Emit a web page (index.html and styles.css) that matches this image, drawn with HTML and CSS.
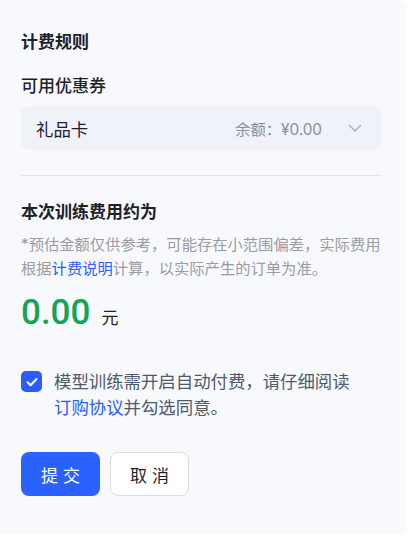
FILE: index.html
```html
<!DOCTYPE html>
<html lang="zh-CN">

<head>
    <meta charset="UTF-8">
    <meta name="viewport" content="width=device-width, initial-scale=1.0">
    <title>计费规则</title>
    <link rel="stylesheet" href="styles.css">
</head>

<body>
    <section class="billing-card">
        <h2 class="title">计费规则</h2>

        <div class="field">
            <label class="field-label">可用优惠券</label>
            <div class="select">
                <span class="select-value">礼品卡</span>
                <span class="select-extra">余额：¥0.00</span>
                <svg class="select-arrow" width="14" height="14" viewBox="0 0 14 14">
                    <path d="M1.5 4.5 L7 10 L12.5 4.5" fill="none" stroke="#a4a9b3" stroke-width="1.3" stroke-linecap="round" stroke-linejoin="round" />
                </svg>
            </div>
        </div>

        <hr class="divider">

        <div class="cost">
            <h3 class="cost-title">本次训练费用约为</h3>
            <p class="cost-note">*预估金额仅供参考，可能存在小范围偏差，实际费用根据<a href="#">计费说明</a>计算，以实际产生的订单为准。</p>
            <div class="cost-amount">
                <span class="amount">0.00</span>
                <span class="unit">元</span>
            </div>
        </div>

        <label class="agree">
            <span class="checkbox">
                <svg width="14" height="14" viewBox="0 0 14 14">
                    <path d="M2.5 7.2 L5.6 10.2 L11.5 4" fill="none" stroke="#fff" stroke-width="2" stroke-linecap="round" stroke-linejoin="round" />
                </svg>
            </span>
            <span class="agree-text">模型训练需开启自动付费，请仔细阅读<a href="#">订购协议</a>并勾选同意。</span>
        </label>

        <div class="actions">
            <button class="btn btn-primary">提 交</button>
            <button class="btn btn-default">取 消</button>
        </div>
    </section>
</body>

</html>
```

FILE: styles.css
```css
body {
    margin: 0;
    padding: 0;
    background-color: #fff;
    font-family: Inter, "Noto Sans CJK SC", sans-serif;
    color: #1d2129;
}

.billing-card {
    width: 406px;
    box-sizing: border-box;
    padding: 30px 24px 38px 21px;
    background-color: #f8f9fc;
    border-radius: 0 8px 8px 0;
    box-shadow: 0 1px 3px rgba(0, 0, 0, 0.04);
}

.title {
    margin: 0;
    font-size: 17px;
    font-weight: 700;
    line-height: 24px;
}

.field {
    margin-top: 20px;
}

.field-label {
    display: block;
    font-size: 17px;
    font-weight: 500;
    line-height: 24px;
}

.select {
    display: flex;
    align-items: center;
    height: 44px;
    margin-top: 8px;
    padding: 0 20px 0 15px;
    background-color: #eff2f9;
    border-radius: 8px;
}

.select-value {
    flex: 1;
    font-size: 17.4px;
    color: #1d2129;
}

.select-extra {
    font-size: 15.3px;
    color: #86909c;
    margin-right: 26px;
}

.divider {
    margin: 25px 0 0;
    border: none;
    border-top: 1px solid #e5e6eb;
}

.cost {
    margin-top: 24px;
}

.cost-title {
    margin: 0;
    font-size: 17px;
    font-weight: 600;
    line-height: 24px;
}

.cost-note {
    margin: 9px 0 0;
    font-size: 15.3px;
    line-height: 24px;
    color: #999ca3;
}

.cost-note a,
.agree-text a {
    color: #2b5cff;
    text-decoration: none;
}

.cost-amount {
    display: flex;
    align-items: baseline;
    margin-top: 10px;
}

.amount {
    font-family: Roboto, sans-serif;
    font-size: 35px;
    font-weight: 500;
    color: #15a35a;
    line-height: 44px;
}

.unit {
    margin-left: 11px;
    font-size: 17px;
}

.agree {
    display: flex;
    align-items: flex-start;
    margin-top: 34px;
}

.checkbox {
    flex: 0 0 21px;
    height: 21px;
    margin-top: 2px;
    display: flex;
    align-items: center;
    justify-content: center;
    background-color: #2b5cff;
    border-radius: 5px;
}

.agree-text {
    max-width: 302px;
    margin-left: 12px;
    font-size: 17.4px;
    line-height: 26px;
    color: #4e5969;
}

.actions {
    display: flex;
    gap: 10px;
    margin-top: 31px;
}

.btn {
    height: 44px;
    width: 79px;
    font-family: inherit;
    font-size: 17px;
    border-radius: 8px;
    cursor: pointer;
}

.btn-primary {
    border: none;
    background-color: #2962ff;
    color: #fff;
}

.btn-default {
    border: 1px solid #dcdde0;
    background-color: #fff;
    color: #1d2129;
}
```
